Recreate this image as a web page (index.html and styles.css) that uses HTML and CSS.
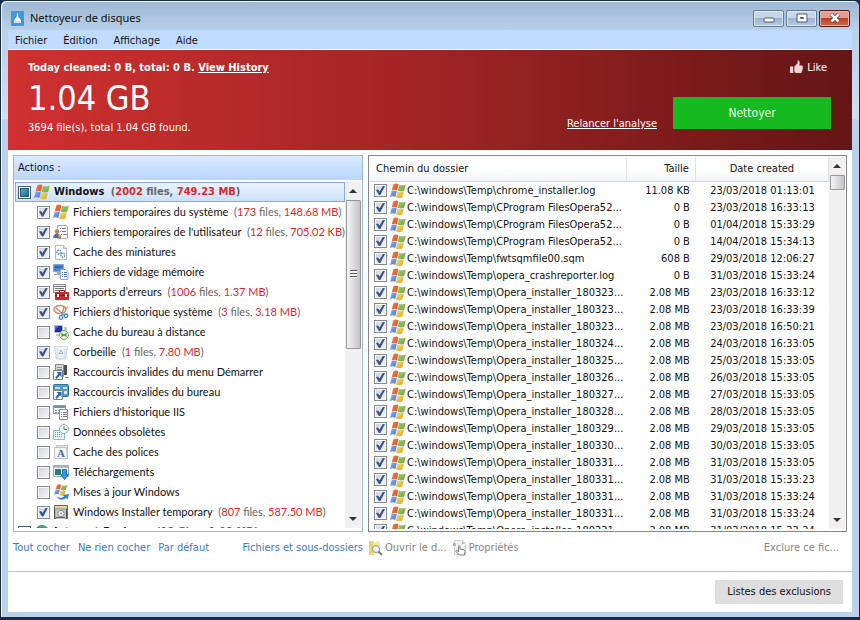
FILE: index.html
```html
<!DOCTYPE html>
<html lang="fr">
<head>
    <meta charset="UTF-8">
    <meta name="viewport" content="width=device-width, initial-scale=1.0">
    <title>Nettoyeur de disques</title>

    <link rel="stylesheet" href="styles.css">
</head>
<body>
    <svg class="sprites" aria-hidden="true">
        <defs>
            <linearGradient id="gRed" x1="0" y1="0" x2="1" y2="1"><stop offset="0" stop-color="#f0813c"/><stop offset="1" stop-color="#d8512c"/></linearGradient>
            <linearGradient id="gGreen" x1="0" y1="0" x2="1" y2="1"><stop offset="0" stop-color="#a3c96b"/><stop offset="1" stop-color="#6fa640"/></linearGradient>
            <linearGradient id="gBlue" x1="0" y1="0" x2="1" y2="1"><stop offset="0" stop-color="#8fb4ee"/><stop offset="1" stop-color="#4a70d0"/></linearGradient>
            <linearGradient id="gYellow" x1="0" y1="0" x2="1" y2="1"><stop offset="0" stop-color="#f6dc6a"/><stop offset="1" stop-color="#dba520"/></linearGradient>
        </defs>
        <symbol id="flag" viewBox="0 0 16 16">
            <path fill="url(#gRed)" d="M3.2 1.500C4.800 .3 6.600 .2 8.500 1.200L7 7.400C5.300 6.400 3.500 6.500 1.700 7.700z"/>
            <path fill="url(#gGreen)" d="M9.200 1.700C11 2.700 13.300 2.500 15.800 1.500L14.200 7.800C11.800 8.800 9.600 8.700 7.600 7.700z"/>
            <path fill="url(#gBlue)" d="M1.500 8.300C3.300 7.200 5.100 7.100 6.800 8L5.300 14C3.600 13 1.800 13.100 0 14.200z"/>
            <path fill="url(#gYellow)" d="M7.500 8.400C9.400 9.400 11.600 9.500 14 8.500L12.300 14.500C10.100 15.600 7.900 15.400 5.900 14.400z"/>
        </symbol>
        <symbol id="user" viewBox="0 0 16 16">
            <path fill="#fff" stroke="#a9aeb5" d="M4.500 1.500h9l1 1v12h-10z"/>
            <path stroke="#77a" fill="none" stroke-dasharray="1 1 4 9" d="M7 4.500h7M7 7.500h7M8 10.500h6"/>
            <circle cx="4" cy="7.500" r="2.200" fill="#b98058"/>
            <path fill="#536f9f" d="M0 14c0-3 2-4.500 4-4.500S8 11 8 14z"/>
            <path fill="#c8a14c" d="M5 10l4 2-3 2z"/>
        </symbol>
        <symbol id="thumbs" viewBox="0 0 16 16">
            <path fill="#fbfdff" stroke="#b4bac2" d="M2.500 1.500h8l3 3v11h-11z"/>
            <path fill="none" stroke="#b4bac2" d="M10.500 1.500v3h3"/>
            <circle cx="6" cy="8" r="2" fill="none" stroke="#5b8cba" stroke-width="1.500" stroke-dasharray="1.500 .8"/>
            <circle cx="9.800" cy="11.200" r="2" fill="none" stroke="#5b8cba" stroke-width="1.500" stroke-dasharray="1.500 .8"/>
        </symbol>
        <symbol id="dump" viewBox="0 0 16 16">
            <path fill="#4d86cc" stroke="#7fa6d4" d="M.5.500h10v7H.5z"/>
            <path fill="#3468b4" d="M2 2h7v2H2z"/>
            <path fill="#8ea9c8" d="M4 8h3v2H4zM1 10h6v1H1z"/>
            <path fill="#fff" stroke="#9aa8ba" d="M7.500 5.500h5l2.500 2v8H7.500z"/>
            <path stroke="#4f79bd" stroke-dasharray="1 1 3 9" d="M9 8.500h6M9 10.500h6M9 12.500h6"/>
        </symbol>
        <symbol id="report" viewBox="0 0 16 16">
            <path fill="#f5f5f5" stroke="#8b8b8b" d="M.5.500h12v8H.5z"/>
            <path stroke="#777" d="M1 2.500h11M2 4.500h9M2 6.500h7"/>
            <path fill="none" stroke="#8d1e1b" d="M6.500 8V6.500h5V8"/>
            <rect x="2" y="8" width="14" height="8" rx="1" fill="#c62d28"/>
            <path stroke="#8c1714" d="M2 11.500h14"/>
            <path fill="#fff" d="M4 10h2v3H4zM12 10h2v3h-2z"/>
        </symbol>
        <symbol id="history" viewBox="0 0 16 16">
            <ellipse cx="7" cy="5.500" rx="6" ry="4" fill="#fff8ee" stroke="#e2875d" stroke-width="1.500"/>
            <path fill="none" stroke="#d66b47" d="M12 5l3-2"/>
            <path stroke="#8f96a0" stroke-width="1.300" d="M3 4l8.500 7.500M11 3L8.500 12"/>
            <circle cx="8" cy="13.500" r="1.800" fill="none" stroke="#3a8bc4" stroke-width="1.300"/>
            <circle cx="13" cy="11.800" r="1.800" fill="none" stroke="#3a8bc4" stroke-width="1.300"/>
        </symbol>
        <symbol id="remote" viewBox="0 0 16 16">
            <path fill="#1a2fb4" stroke="#b8bcc8" d="M1.500 1.500h8v7h-8z"/>
            <path fill="#5167dc" d="M2 2h4L2 6z"/>
            <path fill="#c4c8cf" d="M11 3h3v6h-3zM3 10h6v2H3z"/>
            <circle cx="11" cy="11" r="4.500" fill="#e8f3df" stroke="#76a35c"/>
            <path fill="none" stroke="#3f8130" stroke-width="1.300" d="M8.500 9.500l1.800 1.500-1.800 1.500M13.500 9.500L11.700 11l1.800 1.500"/>
        </symbol>
        <symbol id="bin" viewBox="0 0 16 16">
            <path fill="#eef4f9" stroke="#c3cfdb" d="M1.500 2.500h13l-2 12.500h-9z"/>
            <path stroke="#d5dee7" fill="none" d="M1 2.500h14M4 4l1 10M12 4l-1 10"/>
            <path fill="none" stroke="#8eb1d6" d="M8 6l2 3.500H6z"/>
        </symbol>
        <symbol id="startlink" viewBox="0 0 16 16">
            <path fill="#d7d9dc" stroke="#868a90" d="M2.500.500h8v12h-8z"/>
            <path fill="#4d5259" d="M11 1h3v10h-3z"/>
            <path stroke="#8a8f96" d="M4 3.500h5M4 5.500h5M12 13.500h4"/>
            <path fill="#fff" stroke="#7c8188" d="M.5 6.500h9v9h-9z"/>
            <path fill="#2467b5" d="M3.500 8H8.500v5L6.800 11.300 3.500 15 2.200 13.700 5.200 9.700z"/>
        </symbol>
        <symbol id="desklink" viewBox="0 0 16 16">
            <rect x=".5" y=".5" width="15" height="12" rx="1" fill="#4d9cd6" stroke="#39719e"/>
            <path fill="#c9e8b0" d="M2 3h5v2H2z"/>
            <path fill="#d6ecfa" d="M10 3h4v2h-4zM11 7h3v3h-3z"/>
            <path fill="#fff" stroke="#7c8188" d="M.5 6.500h9v9h-9z"/>
            <path fill="#2467b5" d="M3.500 8H8.500v5L6.800 11.300 3.500 15 2.200 13.700 5.200 9.700z"/>
        </symbol>
        <symbol id="iis" viewBox="0 0 16 16">
            <path fill="#f4f7fb" stroke="#8d98a6" d="M.5 1.500h12v8H.5z"/>
            <path fill="#7092ba" d="M1 2h11v2H1z"/>
            <path stroke="#7085a0" stroke-dasharray="2 1" d="M2 6.500h9M2 8.500h8"/>
            <path fill="#fff" stroke="#909090" d="M6.500 5.500h8v10h-8z"/>
            <path stroke="#7d6d8b" stroke-dasharray="1 1 4 9" d="M8 8.500h6M8 10.500h6M8 12.500h6"/>
        </symbol>
        <symbol id="obsolete" viewBox="0 0 16 16">
            <path fill="#e2f3f5" stroke="#8bbcc8" d="M.5 6.500h11v9H.5z"/>
            <path stroke="#5fa5b7" stroke-dasharray="1 1" d="M2 8.500h8M2 10.500h8M2 12.500h8"/>
            <circle cx="11" cy="5" r="4.500" fill="#f4f8f8" stroke="#93a9a9"/>
            <path fill="none" stroke="#587880" d="M11 2v3.500h3"/>
        </symbol>
        <symbol id="fonts" viewBox="0 0 16 16">
            <path fill="#e3e5e9" stroke="#c3c6cc" d="M3.500 1.500h11v11h-11z"/>
            <path fill="#f5f6f8" stroke="#bdc1c8" d="M1.500 3.500h12l1 11h-13z"/>
            <text class="glyph" x="4" y="13">A</text>
        </symbol>
        <symbol id="download" viewBox="0 0 16 16">
            <path fill="#f4f8fa" stroke="#9aa7ad" d="M.5 1.500h15v11H.5z"/>
            <path fill="#a9bfc9" d="M1 2h14v2H1z"/>
            <path fill="#257f82" d="M2 5h6v6H2z"/>
            <path fill="#2e9be0" stroke="#1b74b4" d="M9.500 5.500h4v5h2L11.500 15.500 7.500 10.500h2z"/>
        </symbol>
        <symbol id="update" viewBox="0 0 16 16">
            <path fill="url(#gRed)" d="M4 1C5.500 0 7 .1 8.300.900L7 5.500C5.500 4.700 4 4.800 2.500 5.700z"/>
            <path fill="url(#gGreen)" d="M9 1.300c1.800.8 3.500.6 5.500-.3L13 5.800C11.200 6.700 9.500 6.600 7.800 5.800z"/>
            <path fill="url(#gBlue)" d="M2.300 6.400C3.900 5.500 5.300 5.400 6.800 6.200L5.500 10.500C4 9.800 2.600 9.900 1 10.800z"/>
            <path fill="url(#gYellow)" d="M7.500 6.600c1.700.8 3.500.8 5.300 0L11.500 11C9.700 11.900 8 11.800 6.200 11z"/>
            <path fill="#2e83cb" d="M3 11c2 3 5 3.500 8 1.500L10 11l6-1-1.500 5.500L13 14C9 17 5 16 3 11z"/>
        </symbol>
        <symbol id="installer" viewBox="0 0 16 16">
            <path fill="#b5b09c" stroke="#6b6960" d="M1.500 1.500h13v13h-13z"/>
            <path fill="#e3d39c" d="M2 2h12v2H2z"/>
            <path stroke="#55534b" d="M1.500 4v11M13.500 5v9"/>
            <rect x="3" y="6" width="10" height="9" rx="1" fill="#c4c8c4"/>
            <circle cx="8" cy="9.500" r="3.200" fill="#eef0ee" stroke="#858a85"/>
            <circle cx="8" cy="9.500" r="1" fill="#7a8586"/>
            <path stroke="#5e615c" d="M3 13.500h9"/>
        </symbol>
        <symbol id="globe" viewBox="0 0 16 16">
            <circle cx="8" cy="8" r="7" fill="#3aa66b"/>
            <path fill="#2a7fc1" d="M4 2.500L9 5 5 9 2 7z"/>
        </symbol>
    </svg>

    <div class="window">
        <header class="titlebar">
            <svg class="app-icon" viewBox="0 0 14 16" aria-hidden="true">
                <rect width="14" height="16" fill="#3f97e0"/>
                <path fill="#fff" d="M6.500 2h1l.5 5c2 1 3 3 3 5.500H3C3 10 4 8 6 7z"/>
                <path fill="#b7d8f4" d="M4 11h6v1H4z"/>
            </svg>
            <h1>Nettoyeur de disques</h1>
            <div class="window-buttons">
                <button type="button" aria-label="Réduire">
                    <svg viewBox="0 0 12 10"><rect x="1" y="5" width="10" height="4" rx="1" fill="#fff" stroke="#4c5b70"/></svg>
                </button>
                <button type="button" aria-label="Agrandir">
                    <svg viewBox="0 0 12 10"><path fill="#fff" fill-rule="evenodd" stroke="#4c5b70" d="M1 1h10v8H1zM4.500 4.500v1h3v-1z"/></svg>
                </button>
                <button type="button" class="close" aria-label="Fermer">
                    <svg viewBox="0 0 12 10"><path stroke="#5d3030" stroke-width="4" d="M2.500 1.500l7 7M9.500 1.500l-7 7"/><path stroke="#fff" stroke-width="2.500" d="M2.500 1.500l7 7M9.500 1.500l-7 7"/></svg>
                </button>
            </div>
        </header>

        <div class="client">
            <nav class="menu">
                <a href="#">Fichier</a>
                <a href="#">Édition</a>
                <a href="#">Affichage</a>
                <a href="#">Aide</a>
            </nav>

            <section class="banner">
                <div class="summary">
                    <p class="today">Today cleaned: 0 B, total: 0 B. <a href="#">View History</a></p>
                    <p class="total">1.04 GB</p>
                    <p class="found">3694 file(s), total 1.04 GB found.</p>
                </div>
                <div class="banner-side">
                    <a class="like" href="#">
                        <svg viewBox="0 0 12 13" aria-hidden="true"><path fill="#eed5d5" d="M0 6h3v6H0zM4 6l3-3V.5c1.700-.5 2.400 1.500 1.600 4.500H11c1.300.2 1.200 1.500.6 2 .6.600.4 1.500-.2 1.900.3.700.1 1.300-.5 1.700.1.800-.3 1.400-1.200 1.400H6l-2-.7z"/></svg>
                        Like
                    </a>
                    <div class="run">
                        <a href="#">Relancer l'analyse</a>
                        <button type="button" class="clean">Nettoyer</button>
                    </div>
                </div>
            </section>

            <main class="panels">
                <section class="panel actions">
                    <h2>Actions :</h2>
                    <div class="scroll-area">
                        <div class="tree">
                            <label class="group"><input type="checkbox" class="partial"><svg><use href="#flag"/></svg>Windows <span class="size">(<b>2002</b> files, <b>749.23 MB</b>)</span></label>
                            <label><input type="checkbox" checked><svg><use href="#flag"/></svg>Fichiers temporaires du système <span class="size">(<b>173</b> files, <b>148.68 MB</b>)</span></label>
                            <label><input type="checkbox" checked><svg><use href="#user"/></svg>Fichiers temporaires de l'utilisateur <span class="size">(<b>12</b> files, <b>705.02 KB</b>)</span></label>
                            <label><input type="checkbox" checked><svg><use href="#thumbs"/></svg>Cache des miniatures</label>
                            <label><input type="checkbox" checked><svg><use href="#dump"/></svg>Fichiers de vidage mémoire</label>
                            <label><input type="checkbox" checked><svg><use href="#report"/></svg>Rapports d’erreurs <span class="size">(<b>1006</b> files, <b>1.37 MB</b>)</span></label>
                            <label><input type="checkbox" checked><svg><use href="#history"/></svg>Fichiers d'historique système <span class="size">(<b>3</b> files, <b>3.18 MB</b>)</span></label>
                            <label><input type="checkbox"><svg><use href="#remote"/></svg>Cache du bureau à distance</label>
                            <label><input type="checkbox" checked><svg><use href="#bin"/></svg>Corbeille <span class="size">(<b>1</b> files, <b>7.80 MB</b>)</span></label>
                            <label><input type="checkbox"><svg><use href="#startlink"/></svg>Raccourcis invalides du menu Démarrer</label>
                            <label><input type="checkbox"><svg><use href="#desklink"/></svg>Raccourcis invalides du bureau</label>
                            <label><input type="checkbox"><svg><use href="#iis"/></svg>Fichiers d'historique IIS</label>
                            <label><input type="checkbox"><svg><use href="#obsolete"/></svg>Données obsolètes</label>
                            <label><input type="checkbox"><svg><use href="#fonts"/></svg>Cache des polices</label>
                            <label><input type="checkbox"><svg><use href="#download"/></svg>Téléchargements</label>
                            <label><input type="checkbox"><svg><use href="#update"/></svg>Mises à jour Windows</label>
                            <label><input type="checkbox" checked><svg><use href="#installer"/></svg>Windows Installer temporary <span class="size">(<b>807</b> files, <b>587.50 MB</b>)</span></label>
                            <label class="group next"><input type="checkbox" class="partial"><svg><use href="#globe"/></svg>Internet Explorer <span class="size">(<b>12</b> files, <b>1.02 MB</b>)</span></label>
                        </div>
                        <div class="scrollbar">
                            <i class="arrow up"></i>
                            <i class="thumb long"></i>
                            <i class="arrow down"></i>
                        </div>
                    </div>
                </section>

                <section class="panel files">
                    <div class="table-wrap">
                        <table>
                            <thead>
                                <tr><th class="path">Chemin du dossier</th><th class="weight">Taille</th><th class="date">Date created</th></tr>
                            </thead>
                            <tbody>
                                <tr><td><label><input type="checkbox" checked><svg><use href="#flag"/></svg>C:\windows\Temp\chrome_installer.log</label></td><td>11.08 KB</td><td>23/03/2018 01:13:01</td></tr>
                                <tr><td><label><input type="checkbox" checked><svg><use href="#flag"/></svg>C:\windows\Temp\CProgram FilesOpera52...</label></td><td>0 B</td><td>23/03/2018 16:33:13</td></tr>
                                <tr><td><label><input type="checkbox" checked><svg><use href="#flag"/></svg>C:\windows\Temp\CProgram FilesOpera52...</label></td><td>0 B</td><td>01/04/2018 15:33:29</td></tr>
                                <tr><td><label><input type="checkbox" checked><svg><use href="#flag"/></svg>C:\windows\Temp\CProgram FilesOpera52...</label></td><td>0 B</td><td>14/04/2018 15:34:13</td></tr>
                                <tr><td><label><input type="checkbox" checked><svg><use href="#flag"/></svg>C:\windows\Temp\fwtsqmfile00.sqm</label></td><td>608 B</td><td>29/03/2018 12:06:27</td></tr>
                                <tr><td><label><input type="checkbox" checked><svg><use href="#flag"/></svg>C:\windows\Temp\opera_crashreporter.log</label></td><td>0 B</td><td>31/03/2018 15:33:24</td></tr>
                                <tr><td><label><input type="checkbox" checked><svg><use href="#flag"/></svg>C:\windows\Temp\Opera_installer_180323...</label></td><td>2.08 MB</td><td>23/03/2018 16:33:12</td></tr>
                                <tr><td><label><input type="checkbox" checked><svg><use href="#flag"/></svg>C:\windows\Temp\Opera_installer_180323...</label></td><td>2.08 MB</td><td>23/03/2018 16:33:39</td></tr>
                                <tr><td><label><input type="checkbox" checked><svg><use href="#flag"/></svg>C:\windows\Temp\Opera_installer_180323...</label></td><td>2.08 MB</td><td>23/03/2018 16:50:21</td></tr>
                                <tr><td><label><input type="checkbox" checked><svg><use href="#flag"/></svg>C:\windows\Temp\Opera_installer_180324...</label></td><td>2.08 MB</td><td>24/03/2018 16:33:05</td></tr>
                                <tr><td><label><input type="checkbox" checked><svg><use href="#flag"/></svg>C:\windows\Temp\Opera_installer_180325...</label></td><td>2.08 MB</td><td>25/03/2018 15:33:05</td></tr>
                                <tr><td><label><input type="checkbox" checked><svg><use href="#flag"/></svg>C:\windows\Temp\Opera_installer_180326...</label></td><td>2.08 MB</td><td>26/03/2018 15:33:05</td></tr>
                                <tr><td><label><input type="checkbox" checked><svg><use href="#flag"/></svg>C:\windows\Temp\Opera_installer_180327...</label></td><td>2.08 MB</td><td>27/03/2018 15:33:05</td></tr>
                                <tr><td><label><input type="checkbox" checked><svg><use href="#flag"/></svg>C:\windows\Temp\Opera_installer_180328...</label></td><td>2.08 MB</td><td>28/03/2018 15:33:05</td></tr>
                                <tr><td><label><input type="checkbox" checked><svg><use href="#flag"/></svg>C:\windows\Temp\Opera_installer_180329...</label></td><td>2.08 MB</td><td>29/03/2018 15:33:05</td></tr>
                                <tr><td><label><input type="checkbox" checked><svg><use href="#flag"/></svg>C:\windows\Temp\Opera_installer_180330...</label></td><td>2.08 MB</td><td>30/03/2018 15:33:05</td></tr>
                                <tr><td><label><input type="checkbox" checked><svg><use href="#flag"/></svg>C:\windows\Temp\Opera_installer_180331...</label></td><td>2.08 MB</td><td>31/03/2018 15:33:05</td></tr>
                                <tr><td><label><input type="checkbox" checked><svg><use href="#flag"/></svg>C:\windows\Temp\Opera_installer_180331...</label></td><td>2.08 MB</td><td>31/03/2018 15:33:23</td></tr>
                                <tr><td><label><input type="checkbox" checked><svg><use href="#flag"/></svg>C:\windows\Temp\Opera_installer_180331...</label></td><td>2.08 MB</td><td>31/03/2018 15:33:24</td></tr>
                                <tr><td><label><input type="checkbox" checked><svg><use href="#flag"/></svg>C:\windows\Temp\Opera_installer_180331...</label></td><td>2.08 MB</td><td>31/03/2018 15:33:24</td></tr>
                                <tr><td><label><input type="checkbox" checked><svg><use href="#flag"/></svg>C:\windows\Temp\Opera_installer_180331...</label></td><td>2.08 MB</td><td>31/03/2018 15:33:24</td></tr>
                            </tbody>
                        </table>
                    </div>
                    <div class="scrollbar">
                        <i class="arrow up"></i>
                        <i class="thumb short"></i>
                        <i class="arrow down"></i>
                    </div>
                </section>

                <div class="links">
                    <a href="#">Tout cocher</a>
                    <a href="#">Ne rien cocher</a>
                    <a href="#">Par défaut</a>
                    <a href="#" class="last">Fichiers et sous-dossiers</a>
                </div>
                <div class="tools">
                    <button type="button" disabled>
                        <svg viewBox="0 0 16 16" aria-hidden="true">
                            <path fill="#e9d36c" d="M1 1h4l1 1v13H1z"/><path fill="#f5e9a8" d="M5 2l7-1v12l-7 2z"/>
                            <circle cx="8" cy="9" r="3.500" fill="#f3f5f6" stroke="#8b8f94"/><path stroke="#777b80" stroke-width="2" d="M10.500 11.500l3.500 3.500"/>
                        </svg>
                        Ouvrir le d...
                    </button>
                    <button type="button" disabled>
                        <svg viewBox="0 0 16 16" aria-hidden="true">
                            <path fill="#f2f2f3" stroke="#cfd0d2" d="M2.500.500h8l3 3v11h-11z"/><path fill="#b5b8bb" d="M10 1l3 3h-3zM1 3h3v3H1z"/>
                            <path fill="#fff" stroke="#77797c" d="M6.500 12V6.500c0-1 1.500-1 1.500 0V9l4 .8c.8.200 1 .7 1 1.400L12.500 15h-5L4 11.500c-.5-1 .5-1.500 1.200-1z"/>
                        </svg>
                        Propriétés
                    </button>
                    <button type="button" class="last" disabled>Exclure ce fic...</button>
                </div>
            </main>

            <footer class="bottom">
                <button type="button">Listes des exclusions</button>
            </footer>
        </div>
    </div>
</body>
</html>
```
FILE: styles.css
```css
* {
    box-sizing: border-box;
}

body {
    margin: 0;
    background-color: #12304a;
    color: #111;
    font-family: "DejaVu Sans Condensed", Tahoma, "DejaVu Sans", sans-serif;
    font-size: 11px;
    line-height: 16px;
}

p, h1, h2 {
    margin: 0;
    font-weight: normal;
}

button {
    font: inherit;
    padding: 0;
    border: none;
    cursor: pointer;
}

.sprites {
    position: absolute;
    width: 0;
    height: 0;
}

.glyph {
    font-family: "Liberation Serif", serif;
    font-size: 11px;
    font-weight: bold;
    fill: #4668b0;
}

/* Window frame */
.window {
    display: flex;
    flex-direction: column;
    height: 100vh;
    padding: 1px 6px 5px;
    border: 1px solid #1b2c3c;
    border-bottom-width: 3px;
    border-radius: 6px 6px 0 0;
    background: linear-gradient(#9db6d2, #b9d1ea 30px, #cfdff0 118px, #b9d1ea 119px);
    box-shadow: inset 1px 1px 0 #eef5fc;
}

.titlebar {
    display: flex;
    align-items: center;
    height: 28px;
    padding: 4px 0 0 4px;
}

.app-icon {
    width: 13px;
    height: 15px;
}

.titlebar h1 {
    margin-left: 6px;
    font-family: "Noto Sans", "Segoe UI", sans-serif;
    font-size: 11px;
}

.window-buttons {
    display: flex;
    gap: 2px;
    margin-left: auto;
    padding-right: 3px;
}

.window-buttons button {
    display: flex;
    align-items: center;
    justify-content: center;
    width: 31px;
    height: 17px;
    border: 1px solid #66798f;
    border-radius: 2px;
    background: linear-gradient(#c6d7ea 45%, #9cb3cd 50%, #b4cbe2);
    box-shadow: inset 0 0 0 1px #dbe8f5;
}

.window-buttons .close {
    border-color: #5b1a1a;
    background: linear-gradient(#e0a193 45%, #bb4027 50%, #cf6a4b);
    box-shadow: inset 0 0 0 1px #e9b5a8;
}

.window-buttons svg {
    width: 12px;
    height: 10px;
}

.client {
    display: flex;
    flex: 1;
    flex-direction: column;
    min-height: 0;
    margin: 0 1px;
    background-color: #fff;
}

.menu {
    display: flex;
    gap: 16px;
    padding: 3px 7px 0;
    border-bottom: 1px solid #f5f9ff;
    background-color: #bfdbff;
}

.menu a {
    color: #111;
    text-decoration: none;
}

/* Red banner */
.banner {
    display: flex;
    justify-content: space-between;
    height: 100px;
    padding: 10px 21px 0 20px;
    background: linear-gradient(to right, #d03030, #a02424 50%, #641515);
    color: #fff;
}

.banner a {
    color: #fff;
}

.today {
    font-weight: bold;
}

.total {
    font-size: 34px;
    line-height: 44px;
}

.banner-side {
    display: flex;
    flex-direction: column;
    align-items: flex-end;
    gap: 21px;
}

.banner .like {
    display: flex;
    gap: 4px;
    padding-right: 4px;
    text-decoration: none;
}

.like svg {
    width: 13px;
    height: 14px;
}

.run {
    display: flex;
    gap: 16px;
}

.run a {
    padding-top: 19px;
}

.clean {
    width: 158px;
    height: 32px;
    background-color: #16b91e;
    color: #e6ffe6;
    font-size: 12px;
}

/* Two lists with their links below */
.panels {
    display: grid;
    flex: 1;
    grid-template-columns: 350fr 479fr;
    grid-template-rows: minmax(0, 1fr) auto;
    column-gap: 5px;
    min-height: 0;
    padding: 5px 5px 15px;
}

.panel {
    min-width: 0;
    min-height: 0;
    overflow: hidden;
    border: 1px solid #9bb9d6;
}

.actions {
    display: flex;
    flex-direction: column;
}

.actions h2 {
    padding: 4px;
    background: linear-gradient(#dceaff, #b9d6ff);
    font-size: 11px;
}

.scroll-area {
    display: flex;
    flex: 1;
    min-height: 0;
    padding: 2px 1px 3px;
}

.tree {
    flex: 1;
    min-width: 0;
    overflow: hidden;
    font-family: Lato, Tahoma, sans-serif;
}

.tree label {
    display: flex;
    align-items: center;
    height: 20px;
    padding-left: 22px;
    white-space: pre;
}

.tree .group {
    padding-left: 2px;
    border: 1px solid #84acdd;
    background: linear-gradient(#eaf4fe, #cbe1f8);
    font-family: "DejaVu Sans Condensed", Tahoma, sans-serif;
    font-weight: bold;
}

.tree .next {
    border-color: transparent;
    background: none;
}

.tree svg {
    flex: none;
    width: 16px;
    height: 16px;
    margin: 0 4px 0 3px;
}

.size {
    padding-left: 3px;
    color: #666;
}

.size b {
    color: #e0262e;
    font-weight: inherit;
}

input[type="checkbox"] {
    flex: none;
    width: 13px;
    height: 13px;
    margin: 0;
    appearance: none;
    border: 1px solid #868b92;
    background: linear-gradient(135deg, #cdd2d9, #f6f6f6);
    box-shadow: inset 0 0 0 1px #f8f8f8;
}

input[type="checkbox"]:checked::before {
    content: "";
    display: block;
    width: 9px;
    height: 9px;
    margin: 1px;
    background-color: #3d5488;
    clip-path: polygon(0 45%, 22% 38%, 40% 62%, 76% 0, 100% 0, 48% 100%, 32% 100%);
}

input[type="checkbox"].partial {
    border-color: #4a5d6c;
    background: linear-gradient(135deg, #5cc3df, #105a86);
    box-shadow: inset 0 0 0 1px #f4f8fa, inset 0 0 0 2px #2a5672;
}

/* Scrollbars */
.scrollbar {
    display: flex;
    flex: none;
    flex-direction: column;
    align-items: center;
    width: 16px;
    background-color: #f0f0f0;
}

.arrow {
    flex: none;
    width: 8px;
    height: 4px;
    margin: 7px 0;
    background-color: #333;
    clip-path: polygon(50% 0, 100% 100%, 0 100%);
}

.arrow.down {
    margin-top: auto;
    clip-path: polygon(0 0, 100% 0, 50% 100%);
}

.thumb {
    display: flex;
    flex: none;
    align-items: center;
    justify-content: center;
    width: 15px;
    height: 15px;
    border: 1px solid #979797;
    border-radius: 1px;
    background: linear-gradient(to right, #f5f5f5, #dcdcdf 50%, #c4c4c8);
}

.thumb.long {
    height: 43%;
}

.thumb.long::before {
    content: "";
    width: 7px;
    height: 8px;
    background: repeating-linear-gradient(#555 0 1px, #f5f5f5 1px 3px);
}

/* File list */
.files {
    display: flex;
    padding: 1px 1px 2px;
    border-color: #828790;
}

.table-wrap {
    flex: 1;
    min-width: 0;
    overflow: hidden;
}

table {
    width: 100%;
    table-layout: fixed;
    border-collapse: separate;
    border-spacing: 0;
}

th {
    height: 25px;
    padding: 0 6px;
    border-right: 1px solid #dfe3e8;
    border-bottom: 1px solid #d5d5d5;
    background: linear-gradient(#fff 50%, #f2f4f6);
    font-weight: normal;
}

.path {
    width: 56%;
    text-align: left;
}

.weight {
    width: 15%;
    text-align: right;
}

td {
    height: 17px;
    padding: 0;
    overflow: hidden;
    white-space: nowrap;
}

td:nth-child(2) {
    padding-right: 6px;
    text-align: right;
}

td:nth-child(3) {
    text-align: center;
}

td label {
    display: flex;
    align-items: center;
    height: 17px;
    padding-left: 4px;
}

td svg {
    flex: none;
    width: 16px;
    height: 16px;
    margin: 0 1px 0 3px;
}

/* Links under the lists */
.links,
.tools {
    display: flex;
    align-items: center;
    padding-top: 8px;
    white-space: nowrap;
}

.links {
    gap: 8px;
}

.links a {
    color: #3a7abd;
    text-decoration: none;
}

.tools {
    gap: 5px;
    padding-right: 8px;
}

.tools button {
    display: flex;
    gap: 1px;
    background: none;
    color: #858585;
}

.tools svg {
    width: 16px;
    height: 16px;
}

.links .last,
.tools .last {
    margin-left: auto;
}

.bottom {
    display: flex;
    justify-content: flex-end;
    padding: 8px 9px;
    border-top: 1px solid #c4c4c4;
}

.bottom button {
    padding: 4px 12px;
    background-color: #dedede;
    color: #111;
}
```
